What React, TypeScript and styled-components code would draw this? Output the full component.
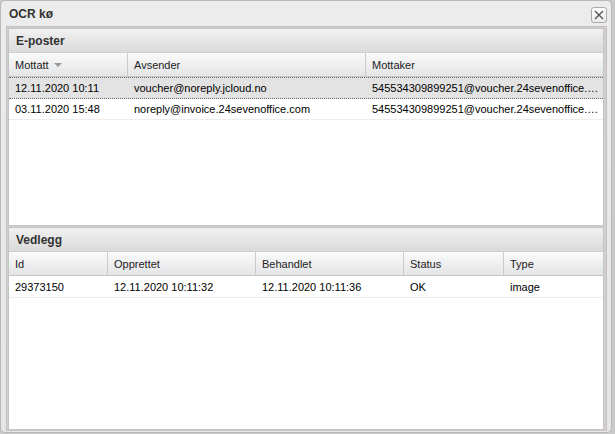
import React from "react";
import styled, { createGlobalStyle } from "styled-components";

const GlobalStyle = createGlobalStyle`
  html, body {
    margin: 0;
    padding: 0;
    background: #c9c9c9;
  }
  body {
    font-family: "Liberation Sans", Arial, sans-serif;
    font-size: 11px;
    color: #000;
  }
`;

interface Column {
  label: string;
  width: number;
  sorted?: boolean;
}

interface GridPanelProps {
  title: string;
  columns: Column[];
  rows: string[][];
  selected?: number;
  size: number;
}

const mailColumns: Column[] = [
  { label: "Mottatt", width: 119, sorted: true },
  { label: "Avsender", width: 238 },
  { label: "Mottaker", width: 239 },
];

const mailRows = [
  ["12.11.2020 10:11", "voucher@noreply.jcloud.no", "545534309899251@voucher.24sevenoffice.com"],
  ["03.11.2020 15:48", "noreply@invoice.24sevenoffice.com", "545534309899251@voucher.24sevenoffice.com"],
];

const attachColumns: Column[] = [
  { label: "Id", width: 99 },
  { label: "Opprettet", width: 148 },
  { label: "Behandlet", width: 148 },
  { label: "Status", width: 100 },
  { label: "Type", width: 101 },
];

const attachRows = [["29373150", "12.11.2020 10:11:32", "12.11.2020 10:11:36", "OK", "image"]];

const GridPanel: React.FunctionComponent<GridPanelProps> = ({ title, columns, rows, selected, size }) => (
  <Panel $size={size}>
    <PanelHeader>{title}</PanelHeader>
    <HeaderRow>
      {columns.map((col, index) => (
        <HeaderCell key={index} $width={col.width} $last={index === columns.length - 1}>
          {col.label}
          {col.sorted && <SortArrow />}
        </HeaderCell>
      ))}
    </HeaderRow>
    <GridBody>
      {rows.map((row, rIndex) => (
        <DataRow key={rIndex} $selected={rIndex === selected}>
          {row.map((cell, cIndex) => (
            <DataCell key={cIndex} $width={columns[cIndex].width}>
              {cell}
            </DataCell>
          ))}
        </DataRow>
      ))}
    </GridBody>
  </Panel>
);

const App: React.FunctionComponent = () => (
  <>
    <GlobalStyle />
    <Window>
      <TitleBar>
        <Title>OCR kø</Title>
        <CloseButton>
          <svg width="12" height="12" viewBox="0 0 12 12">
            <path d="M2 2 L10 10 M10 2 L2 10" stroke="#555" strokeWidth="1.4" />
          </svg>
        </CloseButton>
      </TitleBar>
      <Body>
        <GridPanel title="E-poster" columns={mailColumns} rows={mailRows} selected={0} size={196} />
        <GridPanel title="Vedlegg" columns={attachColumns} rows={attachRows} size={201} />
      </Body>
    </Window>
  </>
);

const Window = styled.div`
  box-sizing: border-box;
  width: 612px;
  height: 433px;
  background: linear-gradient(#ececec, #e6e6e6);
  border: 1px solid #b9b9b9;
  border-radius: 5px;
  display: flex;
  flex-direction: column;
  padding: 0 4px 6px 5px;
`;

const TitleBar = styled.div`
  height: 25px;
  flex-shrink: 0;
  display: flex;
  align-items: center;
  justify-content: space-between;
  padding-left: 3px;
`;

const Title = styled.span`
  font-weight: bold;
  font-size: 12px;
  color: #333;
  margin-top: 1px;
`;

const CloseButton = styled.div`
  box-sizing: border-box;
  width: 16px;
  height: 16px;
  margin-top: 3px;
  border: 1px solid #a8a8a8;
  border-radius: 3px;
  background: linear-gradient(#fdfdfd, #ececec);
  display: flex;
  align-items: center;
  justify-content: center;
`;

const Body = styled.div`
  flex: 1;
  display: flex;
  flex-direction: column;
  gap: 1px;
  border: 1px solid #c8bec2;
  border-bottom-color: #cfc4c8;
  background: #d0d0d0;
  padding: 1px 2px 0 1px;
`;

const Panel = styled.div<{ $size: number }>`
  height: ${(p) => p.$size}px;
  flex-shrink: 0;
  display: flex;
  flex-direction: column;
  background: #fff;
  border: 1px solid #c4c4c4;
  overflow: hidden;
`;

const PanelHeader = styled.div`
  height: 23px;
  flex-shrink: 0;
  display: flex;
  align-items: center;
  padding-left: 7px;
  font-weight: bold;
  font-size: 12px;
  color: #333;
  background: linear-gradient(#f1f1f1, #dadada);
  border-bottom: 1px solid #cfcfcf;
`;

const HeaderRow = styled.div`
  height: 23px;
  flex-shrink: 0;
  display: flex;
  background: linear-gradient(#fafafa, #e4e5e7);
  border-bottom: 1px solid #c5c5c5;
`;

const HeaderCell = styled.div<{ $width: number; $last: boolean }>`
  box-sizing: border-box;
  width: ${(p) => p.$width}px;
  flex-shrink: 0;
  display: flex;
  align-items: center;
  padding-left: 6px;
  color: #222;
  border-right: ${(p) => (p.$last ? "none" : "1px solid #cbcbcb")};
`;

const SortArrow = styled.span`
  display: inline-block;
  margin-left: 5px;
  margin-top: 1px;
  width: 0;
  height: 0;
  border-left: 4px solid transparent;
  border-right: 4px solid transparent;
  border-top: 4px solid #999;
`;

const GridBody = styled.div`
  flex: 1;
  background: #fff;
`;

const DataRow = styled.div<{ $selected: boolean }>`
  height: 20px;
  display: flex;
  align-items: center;
  background: ${(p) => (p.$selected ? "#e3e3e3" : "#fff")};
  border-top: 1px ${(p) => (p.$selected ? "dotted #666" : "solid transparent")};
  border-bottom: 1px ${(p) => (p.$selected ? "dotted #666" : "solid #ededed")};
  & + & {
    border-top: none;
  }
`;

const DataCell = styled.div<{ $width: number }>`
  box-sizing: border-box;
  width: ${(p) => p.$width}px;
  flex-shrink: 0;
  padding: 0 6px;
  white-space: nowrap;
  overflow: hidden;
  text-overflow: ellipsis;
`;

export default App;
